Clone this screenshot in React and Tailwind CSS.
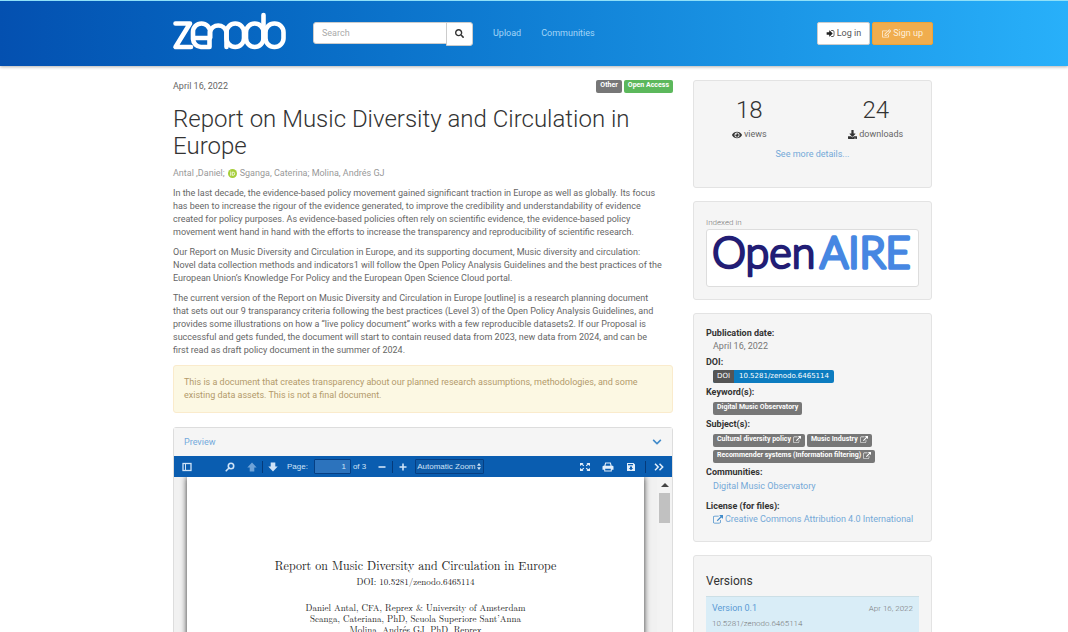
import { FaSearch, FaRegEdit, FaEye, FaDownload, FaChevronDown, FaPrint } from "react-icons/fa";

function ExternalIcon({ className }) {
  return (
    <svg viewBox="0 0 1792 1792" fill="currentColor" aria-hidden="true" className={`shrink-0 ${className}`}>
      <path d="M1408 928v320q0 119-84.5 203.5t-203.5 84.5h-832q-119 0-203.5-84.5t-84.5-203.5v-832q0-119 84.5-203.5t203.5-84.5h704q14 0 23 9t9 23v64q0 14-9 23t-23 9h-704q-66 0-113 47t-47 113v832q0 66 47 113t113 47h832q66 0 113-47t47-113v-320q0-14 9-23t23-9h64q14 0 23 9t9 23zm384-864v512q0 26-19 45t-45 19-45-19l-176-176-652 652q-10 10-23 10t-23-10l-114-114q-10-10-10-23t10-23l652-652-176-176q-19-19-19-45t19-45 45-19h512q26 0 45 19t19 45z" />
    </svg>
  );
}

function SignInIcon({ className }) {
  return (
    <svg viewBox="0 0 1792 1792" fill="currentColor" aria-hidden="true" className={className}>
      <path d="M1312 896q0 26-19 45l-544 544q-19 19-45 19t-45-19-19-45v-288h-448q-26 0-45-19t-19-45v-384q0-26 19-45t45-19h448v-288q0-26 19-45t45-19 45 19l544 544q19 19 19 45zm352-352v704q0 119-84.5 203.5t-203.5 84.5h-320q-13 0-22.5-9.5t-9.5-22.5q0-4-1-20t-.5-26.5 3-23.5 10-19.5 20.5-6.5h320q66 0 113-47t47-113v-704q0-66-47-113t-113-47h-312l-11.5-1-11.5-3-8-5.5-7-9-2-13.5q0-4-1-20t-.5-26.5 3-23.5 10-19.5 20.5-6.5h320q119 0 203.5 84.5t84.5 203.5z" />
    </svg>
  );
}

function ZenodoLogo() {
  return (
    <svg viewBox="0 0 116 42" className="h-[42px] w-[116px]" fill="none" stroke="#fff" strokeWidth="4.6" strokeLinecap="round" strokeLinejoin="round" aria-hidden="true">
      <path d="M3.500 12.500H18L3.500 36H19" />
      <path d="M21 27H38V21a8.500 8.500 0 0 0-17 0v7a8.500 8.500 0 0 0 8 8h8.500v-7" />
      <path d="M38 27V21a8.500 8.500 0 0 1 16.500 0v15" />
      <rect x="54.500" y="12.500" width="17.500" height="23.500" rx="8.700" />
      <rect x="74" y="12.500" width="17.500" height="23.500" rx="8.700" />
      <path d="M91.500 4V28" />
      <rect x="93.500" y="12.500" width="18" height="23.500" rx="8.700" />
    </svg>
  );
}

function OpenAireLogo() {
  return (
    <svg viewBox="0 0 211 56" className="block w-full overflow-visible" role="img" aria-label="OpenAIRE" fontFamily="Lato, sans-serif" fontSize="43" strokeLinejoin="round" strokeLinecap="round">
      <text x="5" y="38" fill="#221d75" stroke="#221d75" strokeWidth="2.600">Open</text>
      <text x="113" y="38" fill="#4687e2" stroke="#4687e2" strokeWidth="3.600">AIRE</text>
    </svg>
  );
}

function Header() {
  return (
    <header className="border-t border-[#8fe0f8] bg-linear-to-r from-[#0450b0] to-[#28b0fa] shadow-[0_1px_3px_rgba(0,0,0,0.3)]">
      <div className="flex h-[65px] items-center pr-[135px] pl-[172px]">
        <a href="#home" aria-label="Zenodo" className="-mt-1">
          <ZenodoLogo />
        </a>
        <form className="ml-[25px] flex items-start" onSubmit={(e) => e.preventDefault()}>
          <input
            aria-label="Search"
            placeholder="Search"
            className="h-[22px] w-[134px] rounded-l-[3px] border border-[#ccc] bg-white px-2 text-[9px] font-normal text-[#555] outline-none placeholder:text-[#aaa]"
          />
          <button aria-label="Submit search" className="-ml-px flex h-6 w-[27px] items-center justify-center rounded-r-[3px] border border-[#ccc] bg-white text-[#333]">
            <FaSearch className="size-[9px]" />
          </button>
        </form>
        <nav className="ml-5 flex gap-5 font-normal text-[#a3d5f7]">
          <a href="#upload">Upload</a>
          <a href="#communities">Communities</a>
        </nav>
        <div className="ml-auto flex gap-0.5 font-normal">
          <button className="flex h-[23px] items-center gap-0.5 rounded-[2px] border border-[#ccc] bg-white px-2 text-[#555]">
            <SignInIcon className="size-[9px] text-[#222]" />
            Log in
          </button>
          <button className="flex h-[23px] items-center gap-0.5 rounded-[2px] border border-[#eea236] bg-[#f0ad4e] px-[9px] text-[#fdf0dc]">
            <FaRegEdit className="size-[9px]" />
            Sign up
          </button>
        </div>
      </div>
    </header>
  );
}

function Badge({ children, className = "bg-[#777]" }) {
  return (
    <span className={`inline-flex h-[13px] items-center gap-0.5 rounded-[2px] px-1 pb-0.5 text-[7px] font-bold whitespace-nowrap text-white ${className}`}>
      {children}
    </span>
  );
}

function Panel({ children, className = "" }) {
  return <section className={`rounded-[3px] border border-[#e3e3e3] bg-[#f5f5f5] px-3 ${className}`}>{children}</section>;
}

function SidebarIcon() {
  return (
    <svg viewBox="0 0 10 10" className="size-[10px]" fill="none" stroke="currentColor" aria-hidden="true">
      <rect x="1" y="1.500" width="8" height="7" strokeWidth="1.300" />
      <path d="M3.500 2v6" strokeWidth="1" />
    </svg>
  );
}

function ArrowIcon({ className = "" }) {
  return (
    <svg viewBox="0 0 10 10" className={`size-[10px] ${className}`} fill="currentColor" aria-hidden="true">
      <path d="M5 .5 9.700 5.500H7.300V9.500H2.700V5.500H.3z" />
    </svg>
  );
}

function Divider({ className = "" }) {
  return <span className={`block h-3 w-px bg-[#053a7a] ${className}`} />;
}

function PrinterIcon() {
  return (
    <svg viewBox="0 0 12 10" className="h-[10px] w-3" fill="currentColor" aria-hidden="true">
      <path fillRule="evenodd" d="M3.200.5h5.600l.9 3.300h.8q1 0 1 1v3H9.800V9.500H2.200V7.800H.5v-3q0-1 1-1h.8zM4 1.500l-.5 2.300h5L8 1.500zM3.200 6.800v1.700h5.600V6.800z" />
    </svg>
  );
}

function PdfToolbar() {
  return (
    <div className="flex h-[21px] items-center bg-[#0a5db0] px-2 font-['Liberation_Sans',sans-serif] text-[8px] text-[#cfe3f7]">
      <button aria-label="Toggle sidebar"><SidebarIcon /></button>
      <button aria-label="Find in document" className="ml-[33px]">
        <svg viewBox="0 0 10 10" className="size-[10px]" fill="none" stroke="currentColor" strokeWidth="1.600" aria-hidden="true">
          <circle cx="6" cy="4" r="2.700" />
          <path d="M4 6 1.200 8.800" strokeLinecap="round" />
        </svg>
      </button>
      <button aria-label="Previous page" className="ml-3 text-[#6fa3d8]"><ArrowIcon /></button>
      <Divider className="ml-[5px]" />
      <button aria-label="Next page" className="ml-[5px]"><ArrowIcon className="rotate-180" /></button>
      <label htmlFor="page" className="ml-[9px]">Page:</label>
      <input id="page" defaultValue="1" className="ml-[6px] h-[15px] w-[37px] rounded-[1px] border border-[#063f83] bg-[#2c73bd] px-1 text-right outline-none" />
      <span className="ml-[2px]">of 3</span>
      <button aria-label="Zoom out" className="ml-3">
        <svg viewBox="0 0 8 8" className="size-2" stroke="currentColor" strokeWidth="1.600" aria-hidden="true"><path d="M.5 4h7" /></svg>
      </button>
      <Divider className="ml-[6px]" />
      <button aria-label="Zoom in" className="ml-[6px]">
        <svg viewBox="0 0 8 8" className="size-2" stroke="currentColor" strokeWidth="1.600" aria-hidden="true"><path d="M.5 4h7M4 .5v7" /></svg>
      </button>
      <div className="relative ml-2 flex">
        <select aria-label="Zoom" className="h-[15px] w-[69px] appearance-none rounded-[1px] border border-[#063f83] bg-[#0d5aa7] pl-px text-[8px] leading-3 outline-none">
          <option>Automatic Zoom</option>
        </select>
        <svg viewBox="0 0 4 7" className="pointer-events-none absolute top-1 right-[3px] h-[7px] w-1" fill="currentColor" aria-hidden="true">
          <path d="M2 0 4 2.800H0zM2 7 0 4.200H4z" />
        </svg>
      </div>
      <div className="ml-auto flex items-center gap-3 text-[#e4effa]">
        <button aria-label="Presentation mode">
          <svg viewBox="0 0 10 10" className="size-[10px]" fill="currentColor" aria-hidden="true">
            <path d="M0 1h3.500L2.600 2l1.600 1.500-.8.800L1.800 2.800 0 4zM10 1v3L8.200 2.800 6.600 4.300l-.8-.8L7.400 2 6.500 1zM0 9V6l1.800 1.200 1.600-1.500.8.800L2.600 8l.9 1zM10 9H6.500l.9-1-1.600-1.500.8-.8 1.600 1.500L10 6z" />
          </svg>
        </button>
        <button aria-label="Print"><PrinterIcon /></button>
        <button aria-label="Download">
          <svg viewBox="0 0 10 10" className="size-[10px]" fill="currentColor" aria-hidden="true">
            <path fillRule="evenodd" d="M1 1h6.500L9 2.500V9H1zM2 2v1.200h5V2zM4 4.500V6H2.800L5 8.300 7.200 6H6V4.500z" />
          </svg>
        </button>
        <Divider className="-ml-[3px]" />
        <button aria-label="Tools" className="-ml-1">
          <svg viewBox="0 0 10 10" className="size-[10px]" fill="none" stroke="currentColor" strokeWidth="1.500" aria-hidden="true">
            <path d="M1 1.800 4.200 5 1 8.200M5.500 1.800 8.700 5 5.500 8.200" />
          </svg>
        </button>
      </div>
    </div>
  );
}

function Preview() {
  return (
    <section className="mt-3.5 rounded-t-[3px] border border-[#ddd]">
      <div className="flex h-7 items-center justify-between bg-[#f5f5f5] px-[10px] font-normal text-[#74aadc]">
        <a href="#preview">Preview</a>
        <button aria-label="Collapse preview" className="text-[#428bca]"><FaChevronDown className="size-[10px]" /></button>
      </div>
      <PdfToolbar />
      <div className="flex bg-[#f1f1f1]">
        <div className="ml-[13px] flex-1 bg-white pt-[79px] pb-10 text-center font-['Latin_Modern_Roman','Liberation_Serif',serif] text-[9px] leading-[11px] font-normal text-[#222] shadow-[0_0_6px_rgba(0,0,0,0.8)] [clip-path:inset(0_-8px_0_-8px)]">
          <h2 className="text-[12px] leading-[18px]">Report on Music Diversity and Circulation in Europe</h2>
          <p className="mt-0.5">DOI: 10.5281/zenodo.6465114</p>
          <p className="mt-[15px]">
            Daniel Antal, CFA, Reprex &amp; University of Amsterdam
            <br />
            Scanga, Cateriana, PhD, Scuola Superiore Sant’Anna
            <br />
            Molina, Andrés GJ, PhD, Reprex
          </p>
        </div>
        <div className="ml-[13px] flex w-[15px] flex-col items-center bg-[#f3f3f3] pt-1.5">
          <svg viewBox="0 0 8 4" className="h-1 w-2" fill="#444" aria-hidden="true"><path d="M4 0 8 4H0z" /></svg>
          <span className="mt-1.5 h-[30px] w-[11px] bg-[#c1c1c1]" />
        </div>
      </div>
    </section>
  );
}

function Term({ children, className = "" }) {
  return <dt className={`font-bold text-[#333] ${className}`}>{children}</dt>;
}

export default function App() {
  return (
    <div className="h-screen overflow-hidden bg-white font-[Roboto,sans-serif] text-[9px] leading-[13px] font-light text-[#333]">
      <Header />
      <div className="grid grid-cols-[minmax(0,1fr)_239px] items-start gap-5 pt-3.5 pr-[136px] pl-[173px]">
        <main className="text-[#444]">
          <div className="flex items-center justify-between">
            <time className="font-normal text-[#666]">April 16, 2022</time>
            <div className="flex gap-0.5">
              <Badge>Other</Badge>
              <Badge className="bg-[#5cb85c]">Open Access</Badge>
            </div>
          </div>
          <h1 className="mt-[13px] text-[24px] leading-[27px] text-[#333]">Report on Music Diversity and Circulation in Europe</h1>
          <p className="mt-[7px] flex items-center gap-[3px] font-normal text-[#999]">
            <span>Antal ,Daniel;</span>
            <svg viewBox="0 0 10 10" className="size-[9px]" aria-hidden="true">
              <circle cx="5" cy="5" r="5" fill="#a6ce39" />
              <path d="M3 3.500v4M3 2v.8M4.700 3.500h1a1.700 1.700 0 0 1 0 3.500h-1z" fill="none" stroke="#fff" strokeWidth=".9" />
            </svg>
            <span>Sganga, Caterina; Molina, Andrés GJ</span>
          </p>
          <div className="mt-[7px] space-y-[7px] font-normal whitespace-nowrap text-[#666]">
            <p>
              In the last decade, the evidence-based policy movement gained significant traction in Europe as well as globally. Its focus<br />
              has been to increase the rigour of the evidence generated, to improve the credibility and understandability of evidence<br />
              created for policy purposes. As evidence-based policies often rely on scientific evidence, the evidence-based policy<br />
              movement went hand in hand with the efforts to increase the transparency and reproducibility of scientific research.
            </p>
            <p>
              Our Report on Music Diversity and Circulation in Europe, and its supporting document, Music diversity and circulation:<br />
              Novel data collection methods and indicators1 will follow the Open Policy Analysis Guidelines and the best practices of the<br />
              European Union’s Knowledge For Policy and the European Open Science Cloud portal.
            </p>
            <p>
              The current version of the Report on Music Diversity and Circulation in Europe [outline] is a research planning document<br />
              that sets out our 9 transparancy criteria following the best practices (Level 3) of the Open Policy Analysis Guidelines, and<br />
              provides some illustrations on how a “live policy document” works with a few reproducible datasets2. If our Proposal is<br />
              successful and gets funded, the document will start to contain reused data from 2023, new data from 2024, and can be<br />
              first read as draft policy document in the summer of 2024.
            </p>
          </div>
          <div className="mt-2 rounded-[3px] border border-[#faebcc] bg-[#fcf8e3] px-[10px] py-[10px] font-normal text-[#b39a6b]">
            This is a document that creates transparency about our planned research assumptions, methodologies, and some
            <br />
            existing data assets. This is not a final document.
          </div>
          <Preview />
        </main>

        <aside className="space-y-[13px]">
          <Panel className="h-[108px] pt-4 text-center">
            <div className="grid grid-cols-2 gap-x-4">
              <div className="pr-3">
                <div className="text-[24px] leading-[27px]">18</div>
                <div className="mt-1 flex items-center justify-center gap-0.5 font-normal text-[#666]"><FaEye className="size-[10px] text-[#333]" />views</div>
              </div>
              <div className="pl-3">
                <div className="text-[24px] leading-[27px]">24</div>
                <div className="mt-1 flex items-center justify-center gap-0.5 font-normal text-[#666]"><FaDownload className="size-[9px] text-[#333]" />downloads</div>
              </div>
            </div>
            <a href="#details" className="mt-[7px] inline-block font-normal text-[#74a9d8]">See more details...</a>
          </Panel>

          <Panel className="pt-3.5 pb-3">
            <p className="text-[8px] text-[#777]">Indexed in</p>
            <div className="rounded-[3px] border border-[#ddd] bg-white"><OpenAireLogo /></div>
          </Panel>

          <Panel className="pt-[13px] pb-[15px]">
            <dl className="font-normal">
              <Term>Publication date:</Term>
              <dd className="pl-[7px] text-[#777]">April 16, 2022</dd>
              <Term className="mt-[3px]">DOI:</Term>
              <dd className="flex pt-px pl-[7px]">
                <a href="#doi" className="flex overflow-hidden rounded-[2px] bg-[#0d7cc0] font-['DejaVu_Sans',sans-serif] text-[7px] text-white">
                  <span className="bg-[#555] px-1">DOI</span>
                  <span className="px-[5px]">10.5281/zenodo.6465114</span>
                </a>
              </dd>
              <Term className="mt-[3px]">Keyword(s):</Term>
              <dd className="flex pt-[3px] pl-[7px]"><Badge>Digital Music Observatory</Badge></dd>
              <Term className="mt-[3px]">Subject(s):</Term>
              <dd className="flex flex-wrap gap-x-0.5 gap-y-[3px] pt-[3px] pl-[7px]">
                <Badge>Cultural diversity policy <ExternalIcon className="size-[8px]" /></Badge>
                <Badge>Music Industry <ExternalIcon className="size-[8px]" /></Badge>
                <Badge>Recommender systems (Information filtering) <ExternalIcon className="size-[8px]" /></Badge>
              </dd>
              <Term className="mt-[3px]">Communities:</Term>
              <dd className="pt-px pl-[7px]"><a href="#community" className="text-[#74a9d8]">Digital Music Observatory</a></dd>
              <Term className="mt-[7px]">License (for files):</Term>
              <dd className="pl-[7px]">
                <a href="#license" className="flex items-center gap-0.5 whitespace-nowrap text-[#74a9d8]">
                  <ExternalIcon className="size-[10px] text-[#428bca]" />
                  Creative Commons Attribution 4.0 International
                </a>
              </dd>
            </dl>
          </Panel>

          <Panel className="pt-[17px] pb-4">
            <h2 className="text-[12px] leading-4 font-normal">Versions</h2>
            <div className="mt-[7px] border-t border-[#ccdfe6] bg-[#d9edf7] px-[6px] pt-[5px] pb-2">
              <div className="flex items-center justify-between">
                <a href="#version" className="font-normal text-[#5b9bd5]">Version 0.1</a>
                <time className="text-[8px] text-[#777]">Apr 16, 2022</time>
              </div>
              <p className="mt-[2px] text-[8px] text-[#777]">10.5281/zenodo.6465114</p>
            </div>
          </Panel>
        </aside>
      </div>
    </div>
  );
}
